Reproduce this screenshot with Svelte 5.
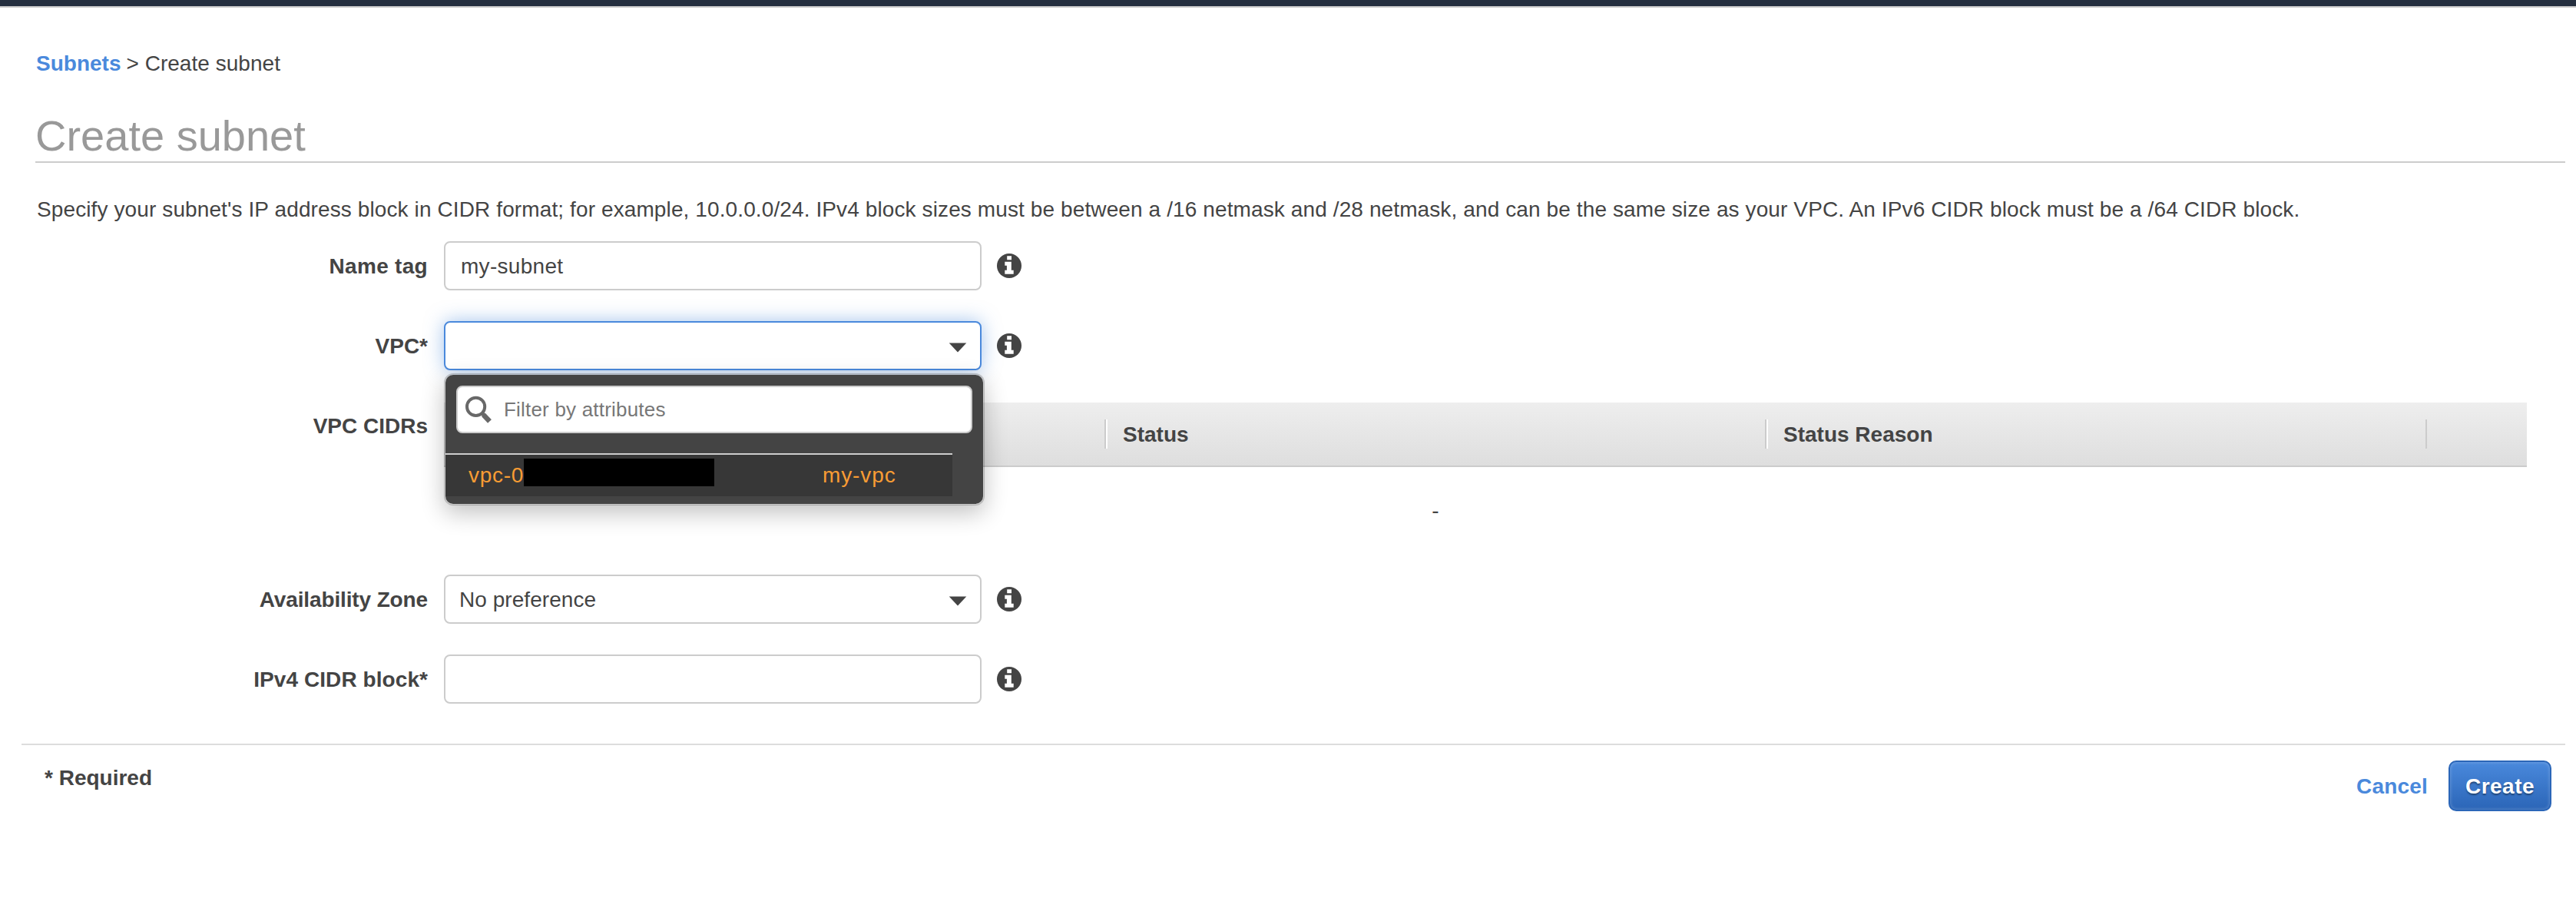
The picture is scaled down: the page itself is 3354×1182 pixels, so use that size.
<script>
  let name = $state('my-subnet');
  let cidr = $state('');
  let filter = $state('');
</script>

{#snippet info()}
  <svg class="info" viewBox="0 0 32 32" aria-hidden="true">
    <circle cx="16" cy="16" r="16" fill="#444" />
    <path fill="#fff" d="M13.2 3.3h5.8v4.9h-5.8zM10.3 10.7h8.5v11h2.9v5H10.3v-5h2.6v-6h-2.6z" />
  </svg>
{/snippet}

{#snippet caret()}
  <svg class="caret" viewBox="0 0 24 13" aria-hidden="true">
    <path fill="#444" d="M.7 .4h22.6L12 12.4z" />
  </svg>
{/snippet}

<div class="topbar"></div>

<main>
  <header>
    <nav><a class="link" href="#subnets">Subnets</a><span class="crumb">&gt; Create subnet</span></nav>
    <h1>Create subnet</h1>
    <p>Specify your subnet's IP address block in CIDR format; for example, 10.0.0.0/24. IPv4 block sizes must be between a /16 netmask and /28 netmask, and can be the same size as your VPC. An IPv6 CIDR block must be a /64 CIDR block.</p>
  </header>

  <form>
    <div class="row">
      <label class="name-label" for="name">Name tag</label>
      <input id="name" class="field name" bind:value={name} />
      {@render info()}
    </div>

    <div class="row">
      <span class="label">VPC*</span>
      <div class="picker">
        <div class="field select focused">{@render caret()}</div>
        <div class="dropdown">
          <div class="filter">
            <svg class="search" viewBox="0 0 34 36" aria-hidden="true">
              <circle cx="13.6" cy="14.4" r="11.6" fill="none" stroke="#686868" stroke-width="4" />
              <path d="M21.5 22.5l3.5 4" stroke="#686868" stroke-width="5" />
              <path d="M23.5 25l8 8.5" stroke="#686868" stroke-width="6.6" />
            </svg>
            <input placeholder="Filter by attributes" bind:value={filter} />
          </div>
          <div class="option">
            <span class="vpc-id">vpc-0</span><span class="redacted"></span><span class="vpc-name">my-vpc</span>
          </div>
        </div>
      </div>
      {@render info()}
    </div>

    <div class="row cidrs">
      <span class="label">VPC CIDRs</span>
      <div class="table">
        <div class="thead">
          <div class="th"></div>
          <div class="th">Status</div>
          <div class="th">Status Reason</div>
          <div class="rest"></div>
        </div>
        <div class="empty">-</div>
      </div>
    </div>

    <div class="row">
      <span class="label zone-label">Availability Zone</span>
      <div class="field select"><span>No preference</span>{@render caret()}</div>
      {@render info()}
    </div>

    <div class="row">
      <label class="block-label" for="cidr">IPv4 CIDR block*</label>
      <input id="cidr" class="field" bind:value={cidr} />
      {@render info()}
    </div>
  </form>

  <footer>
    <span class="required">* Required</span>
    <div class="actions">
      <a class="link cancel" href="#cancel">Cancel</a>
      <button type="button">Create</button>
    </div>
  </footer>
</main>

<style>
  :global(body) {
    background: #fff;
    overflow: hidden;
  }
  * {
    box-sizing: border-box;
  }
  .topbar {
    height: 10px;
    background: #252f3f;
    border-bottom: 2px solid #ccc;
  }
  main {
    font: 28px/32px 'Liberation Sans', Arial, sans-serif;
    color: #444;
  }
  header {
    padding: 57px 14px 0 46px;
  }
  nav {
    display: flex;
    gap: 7px;
    padding-left: 1px;
  }
  .crumb {
    letter-spacing: 0.03px;
  }
  .link {
    color: #4a89dc;
    font-weight: bold;
    text-decoration: none;
  }
  h1 {
    margin: 46px 0 0;
    padding-bottom: 1px;
    border-bottom: 2px solid #ccc;
    font-size: 56px;
    line-height: 64px;
    font-weight: normal;
    color: #999;
  }
  p {
    margin: 45px 0 0;
    padding-left: 2px;
    letter-spacing: 0.11px;
    white-space: nowrap;
  }
  form {
    display: flex;
    flex-direction: column;
    gap: 40px;
    padding-top: 25px;
  }
  .row {
    display: flex;
    align-items: center;
    height: 64px;
  }
  .label,
  label {
    width: 558px;
    margin-right: 20px;
    padding: 1px 1px 0 0;
    text-align: right;
    line-height: 64px;
    font-weight: bold;
    flex: none;
  }
  .name-label {
    letter-spacing: 0.3px;
  }
  .zone-label {
    letter-spacing: -0.13px;
  }
  .block-label {
    letter-spacing: 0.07px;
  }
  .field {
    width: 700px;
    height: 64px;
    border: 2px solid #ccc;
    border-radius: 8px;
    background: #fff;
    padding: 1px 20px 0;
    font: inherit;
    color: inherit;
    outline: none;
  }
  .name {
    letter-spacing: 0.3px;
  }
  .select {
    display: flex;
    align-items: center;
    padding: 1px 17px 0 18px;
    letter-spacing: 0.05px;
  }
  .focused {
    border-color: #4a89dc;
    box-shadow: 0 0 24px rgba(74, 137, 220, 0.5);
  }
  .caret {
    width: 24px;
    height: 13px;
    margin: 3px 0 0 auto;
  }
  .info {
    width: 32px;
    height: 32px;
    margin-left: 20px;
  }
  .picker {
    position: relative;
  }
  .dropdown {
    position: absolute;
    z-index: 1;
    top: 68px;
    left: 0;
    width: 704px;
    height: 172px;
    padding-top: 14px;
    border: 2px solid rgba(0, 0, 0, 0.2);
    border-radius: 12px;
    background: #444;
    background-clip: padding-box;
    box-shadow: 0 10px 30px rgba(0, 0, 0, 0.24);
  }
  .filter {
    display: flex;
    align-items: center;
    width: 672px;
    height: 62px;
    margin-left: 14px;
    padding-left: 10px;
    border: 2px solid #ccc;
    border-radius: 8px;
    background: #fff;
  }
  .search {
    width: 34px;
    height: 36px;
    flex: none;
  }
  .filter input {
    flex: 1;
    margin: 0 0 0 16px;
    padding: 0;
    border: 0;
    outline: 0;
    background: none;
    font: 26px/32px 'Liberation Sans', Arial, sans-serif;
    letter-spacing: 0.2px;
    color: #444;
  }
  .filter input::placeholder {
    color: #777;
    opacity: 1;
  }
  .option {
    display: flex;
    align-items: center;
    width: 660px;
    height: 56px;
    margin-top: 26px;
    padding-left: 30px;
    border-top: 2px solid #ccc;
    background: #373737;
    color: #f89c34;
  }
  .vpc-id {
    width: 72px;
    letter-spacing: 0.7px;
  }
  .redacted {
    width: 248px;
    height: 36px;
    margin-top: -8px;
    background: #000;
  }
  .vpc-name {
    margin-left: 141px;
    letter-spacing: 0.9px;
  }
  .cidrs {
    height: 186px;
    align-items: flex-start;
  }
  .table {
    width: 2712px;
    margin-top: 2px;
  }
  .thead {
    display: flex;
    align-items: center;
    height: 84px;
    border-bottom: 2px solid #ccc;
    background: linear-gradient(#eee, #dedede);
  }
  .th {
    width: 860px;
    height: 38px;
    padding-left: 22px;
    border-right: 2px solid #ccc;
    line-height: 39px;
    font-weight: bold;
  }
  .th:first-child {
    width: 862px;
  }
  .th + .th {
    box-shadow: inset 2px 0 #fff;
  }
  .empty {
    width: 2582px;
    padding-top: 41px;
    text-align: center;
  }
  footer {
    display: flex;
    justify-content: space-between;
    margin: 52px 14px 0 28px;
    padding: 20px 18px 0 30px;
    border-top: 2px solid #ddd;
    font-weight: bold;
  }
  .required {
    margin-top: 7px;
  }
  .actions {
    display: flex;
    align-items: center;
    gap: 27px;
  }
  .cancel {
    padding-top: 2px;
    letter-spacing: 0.2px;
  }
  button {
    width: 134px;
    height: 66px;
    padding: 2px 0 0;
    border: 2px solid #2b66b8;
    border-radius: 10px;
    background: linear-gradient(#4a89dc, #2b65b7);
    box-shadow: inset 0 0 4px rgba(255, 255, 255, 0.3);
    font: bold 28px/32px 'Liberation Sans', Arial, sans-serif;
    letter-spacing: 0.5px;
    color: #fff;
    text-shadow: 0 2px 2px rgba(0, 0, 0, 0.4);
  }
</style>
